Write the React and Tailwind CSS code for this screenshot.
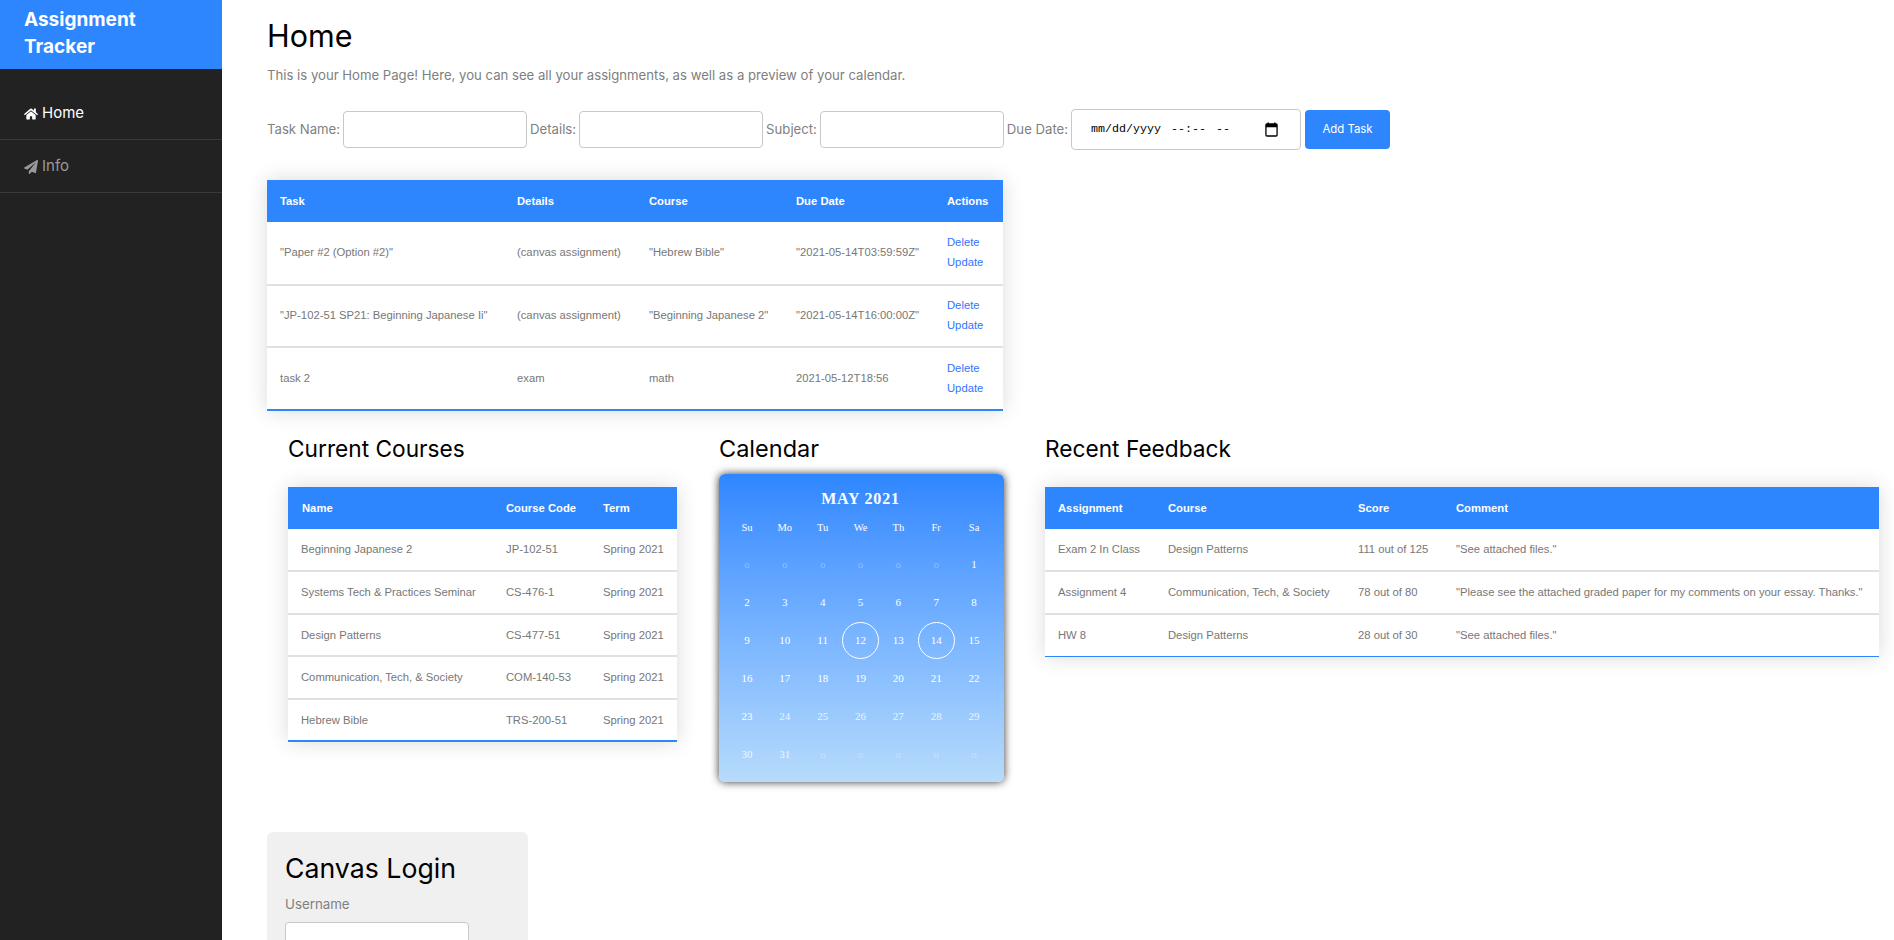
import React from "react";
import { FaHome, FaPaperPlane } from "react-icons/fa";

const tasks = [
  ['"Paper #2 (Option #2)"', "(canvas assignment)", '"Hebrew Bible"', '"2021-05-14T03:59:59Z"'],
  ['"JP-102-51 SP21: Beginning Japanese Ii"', "(canvas assignment)", '"Beginning Japanese 2"', '"2021-05-14T16:00:00Z"'],
  ["task 2", "exam", "math", "2021-05-12T18:56"],
];
const courses = [
  ["Beginning Japanese 2", "JP-102-51", "Spring 2021"],
  ["Systems Tech & Practices Seminar", "CS-476-1", "Spring 2021"],
  ["Design Patterns", "CS-477-51", "Spring 2021"],
  ["Communication, Tech, & Society", "COM-140-53", "Spring 2021"],
  ["Hebrew Bible", "TRS-200-51", "Spring 2021"],
];
const feedback = [
  ["Exam 2 In Class", "Design Patterns", "111 out of 125", '"See attached files."'],
  ["Assignment 4", "Communication, Tech, & Society", "78 out of 80", '"Please see the attached graded paper for my comments on your essay. Thanks."'],
  ["HW 8", "Design Patterns", "28 out of 30", '"See attached files."'],
];
const days = ["Su", "Mo", "Tu", "We", "Th", "Fr", "Sa"];
const cells = [
  "o", "o", "o", "o", "o", "o", "1",
  "2", "3", "4", "5", "6", "7", "8",
  "9", "10", "11", "12", "13", "14", "15",
  "16", "17", "18", "19", "20", "21", "22",
  "23", "24", "25", "26", "27", "28", "29",
  "30", "31", "o", "o", "o", "o", "o",
];

const Th = ({ className = "", children }) => (
  <th className={`px-[13px] pt-[1px] text-left font-bold text-white text-[11.25px] h-[42px] whitespace-nowrap ${className}`}>{children}</th>
);
const Td = ({ children }) => (
  <td className="px-[13px] text-[#777777] text-[11.25px] whitespace-nowrap border-b-2 border-[#e0e0e0] group-last:border-b-0">{children}</td>
);
const Label = ({ children }) => <label className="text-[13.17px] text-[#808080] whitespace-nowrap">{children}</label>;
const TextInput = () => (
  <input type="text" className="w-[184px] h-[37px] bg-white border border-[#c8c8c8] rounded-[4px] mx-[3px]" />
);

function TaskTable() {
  return (
    <table className="table-fixed w-[736px] border-collapse bg-white shadow-[0_0_20px_rgba(0,0,0,0.15)] border-b-2 border-[#2e86ff] font-['Liberation_Sans',Arial,sans-serif]">
      <thead className="bg-[#2e86ff]">
        <tr>
          <Th className="w-[237px]">Task</Th>
          <Th className="w-[132px]">Details</Th>
          <Th className="w-[147px]">Course</Th>
          <Th className="w-[151px]">Due Date</Th>
          <Th className="w-[69px]">Actions</Th>
        </tr>
      </thead>
      <tbody>
        {tasks.map((r, i) => (
          <tr key={i} className="group h-[62.5px]">
            {r.map((c, j) => (
              <Td key={j}>{c}</Td>
            ))}
            <Td>
              <div className="flex flex-col gap-[6px] pb-[1px] text-[#3273ff] leading-[14px]">
                <a>Delete</a>
                <a>Update</a>
              </div>
            </Td>
          </tr>
        ))}
      </tbody>
    </table>
  );
}

function CourseTable() {
  return (
    <table className="table-fixed w-[389px] border-collapse bg-white shadow-[0_0_20px_rgba(0,0,0,0.15)] border-b-2 border-[#2e86ff] font-['Liberation_Sans',Arial,sans-serif]">
      <thead className="bg-[#2e86ff]">
        <tr>
          <Th className="w-[205px] pl-[14px]">Name</Th>
          <Th className="w-[97px]">Course Code</Th>
          <Th className="w-[87px]">Term</Th>
        </tr>
      </thead>
      <tbody>
        {courses.map((r, i) => (
          <tr key={i} className="group h-[42.6px]">
            {r.map((c, j) => (
              <Td key={j}>{c}</Td>
            ))}
          </tr>
        ))}
      </tbody>
    </table>
  );
}

function FeedbackTable() {
  return (
    <table className="table-fixed w-[834px] border-collapse bg-white shadow-[0_0_20px_rgba(0,0,0,0.15)] border-b border-[#2e86ff] font-['Liberation_Sans',Arial,sans-serif]">
      <thead className="bg-[#2e86ff]">
        <tr>
          <Th className="w-[110px]">Assignment</Th>
          <Th className="w-[190px]">Course</Th>
          <Th className="w-[98px]">Score</Th>
          <Th>Comment</Th>
        </tr>
      </thead>
      <tbody>
        {feedback.map((r, i) => (
          <tr key={i} className="group h-[42.6px]">
            {r.map((c, j) => (
              <Td key={j}>{c}</Td>
            ))}
          </tr>
        ))}
      </tbody>
    </table>
  );
}

function Calendar() {
  return (
    <div className="w-[285px] h-[308px] rounded-[6px] pl-[9px] pr-[11px] bg-gradient-to-b from-[#2e86ff] to-[#b7dbfb] shadow-[0_0_8px_rgba(0,0,0,0.8)] font-['Liberation_Serif',serif] text-white">
      <div className="text-center font-bold text-[16px] tracking-[0.8px] pt-[15px] h-[45px] leading-[20px]">MAY 2021</div>
      <div className="grid grid-cols-7 h-[18px] items-center text-center text-[10.5px]">
        {days.map((d) => (
          <div key={d}>{d}</div>
        ))}
      </div>
      <div className="grid grid-cols-7 mt-[9px] auto-rows-[38px] items-center justify-items-center text-center text-[11px]">
        {cells.map((c, i) =>
          c === "o" ? (
            <div key={i} className="opacity-30">o</div>
          ) : (
            <div
              key={i}
              className={
                c === "12" || c === "14"
                  ? "w-[37px] h-[37px] rounded-full border border-white flex items-center justify-center"
                  : i > 28
                  ? "opacity-80"
                  : ""
              }
            >
              {c}
            </div>
          )
        )}
      </div>
    </div>
  );
}

export default function App() {
  return (
    <div className="flex h-screen overflow-hidden bg-white font-['Inter',sans-serif]">
      <aside className="w-[222px] shrink-0 bg-[#222222] text-white">
        <div className="h-[69px] bg-[#2e86ff] pl-[24px] pt-[6px] text-[19px] leading-[27px] font-bold">
          Assignment<br />Tracker
        </div>
        <nav className="mt-[18px]">
          <div className="h-[53px] flex items-center gap-[4px] pl-[24px] pt-[1px] text-[15px] border-b border-[#3a3a3a]">
            <FaHome className="w-[14px] h-[14px]" /> Home
          </div>
          <div className="h-[53px] flex items-center gap-[4px] pl-[24px] pt-[1px] text-[15px] text-[#999999] border-b border-[#3a3a3a]">
            <FaPaperPlane className="w-[14px] h-[14px]" /> Info
          </div>
        </nav>
      </aside>
      <main className="flex-1 min-w-0 pl-[45px]">
        <h1 className="mt-[18px] text-[30.5px] leading-[36px] text-black font-normal">Home</h1>
        <p className="mt-[11px] text-[13.15px] leading-[20px] text-[#808080]">
          This is your Home Page! Here, you can see all your assignments, as well as a preview of your calendar.
        </p>
        <form className="mt-[24px] flex items-center h-[41px]">
          <Label>Task Name:</Label>
          <TextInput />
          <Label>Details:</Label>
          <TextInput />
          <Label>Subject:</Label>
          <TextInput />
          <Label>Due Date:</Label>
          <div className="w-[230px] h-[41px] ml-[3px] pl-[19px] pr-[22px] bg-white border border-[#c8c8c8] rounded-[4px] text-black text-[11.67px] font-['Liberation_Mono',monospace] flex items-center gap-[10px]">
            <span>mm/dd/yyyy</span>
            <span>--:--</span>
            <span>--</span>
            <svg viewBox="0 0 14 16" className="ml-auto w-[13px] h-[15px]" fill="none">
              <path d="M3.5 0.5v2M10.5 0.5v2" stroke="#000" strokeWidth="1.6" />
              <rect x="1" y="2" width="12" height="13" rx="1.2" stroke="#000" strokeWidth="1.4" />
              <rect x="1" y="2" width="12" height="3.6" fill="#000" />
            </svg>
          </div>
          <button type="button" className="ml-[4px] w-[85px] h-[39px] bg-[#2e86ff] text-white text-[11.4px] rounded-[4px]">
            Add Task
          </button>
        </form>
        <div className="mt-[30px]">
          <TaskTable />
        </div>
        <div className="mt-[26px] flex items-start">
          <section className="ml-[21px] w-[389px]">
            <h2 className="text-[22.7px] leading-[24px] text-black h-[50px]">Current Courses</h2>
            <CourseTable />
          </section>
          <section className="ml-[42px] w-[285px]">
            <h2 className="text-[23.5px] leading-[24px] text-black h-[37px]">Calendar</h2>
            <Calendar />
          </section>
          <section className="ml-[41px] w-[834px]">
            <h2 className="text-[22.7px] leading-[24px] text-black h-[50px]">Recent Feedback</h2>
            <FeedbackTable />
          </section>
        </div>
        <div className="mt-[50px] w-[261px] rounded-[6px] bg-[#f0f0f0] px-[18px] pt-[20px] pb-[20px]">
          <h2 className="text-[26.7px] leading-[32px] text-black">Canvas Login</h2>
          <div className="mt-[10px] text-[13.3px] leading-[20px] text-[#808080]">Username</div>
          <input type="text" className="mt-[8px] w-[184px] h-[37px] bg-white border border-[#c8c8c8] rounded-[4px]" />
        </div>
      </main>
    </div>
  );
}
